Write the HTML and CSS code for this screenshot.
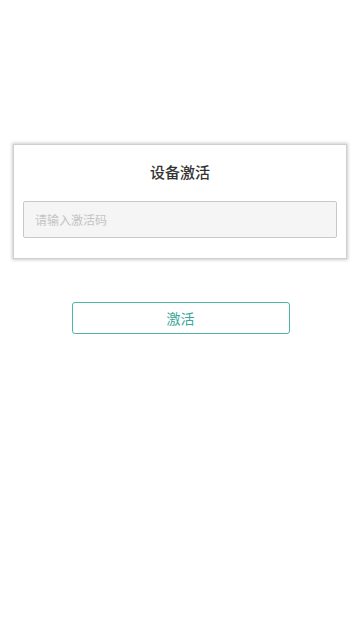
FILE: index.html
```html
<!DOCTYPE html>
<html lang="zh">
<head>
<meta charset="utf-8">
<meta name="viewport" content="width=360">
<link rel="stylesheet" href="styles.css">
</head>
<body>
<div class="page">
  <div class="card">
    <div class="title">设备激活</div>
    <input class="code" type="text" placeholder="请输入激活码">
  </div>
  <div class="actions">
    <button class="btn">激活</button>
  </div>
</div>
</body>
</html>
```
FILE: styles.css
```css
html, body {
  margin: 0;
  padding: 0;
  background: #ffffff;
  font-family: "Noto Sans CJK SC", "Noto Sans", sans-serif;
}
.page {
  padding-top: 144px;
}
.card {
  margin: 0 13px;
  background: #fff;
  border: 1px solid #cfcfcf;
  box-shadow: 0 0 3px 1px rgba(0, 0, 0, 0.2);
  padding: 14px 9px 20px;
  display: flex;
  flex-direction: column;
}
.title {
  text-align: center;
  font-size: 15px;
  font-weight: 500;
  line-height: 26px;
  color: #333;
  margin-bottom: 16px;
}
.code {
  box-sizing: border-box;
  height: 37px;
  width: 100%;
  border: 1px solid #c8c8c8;
  border-radius: 2px;
  background: #f5f5f5;
  padding: 0 11px;
  font-family: inherit;
  font-size: 12px;
  color: #333;
  outline: none;
}
.code::placeholder {
  color: #c4c4c4;
}
.actions {
  display: flex;
  justify-content: center;
  margin-top: 43px;
}
.btn {
  box-sizing: border-box;
  width: 218px;
  height: 32px;
  margin-left: 1px;
  border: 1px solid #4fb3a8;
  border-radius: 3px;
  background: #fff;
  color: #3aa89b;
  font-family: inherit;
  font-size: 14px;
  padding: 0;
}
```
